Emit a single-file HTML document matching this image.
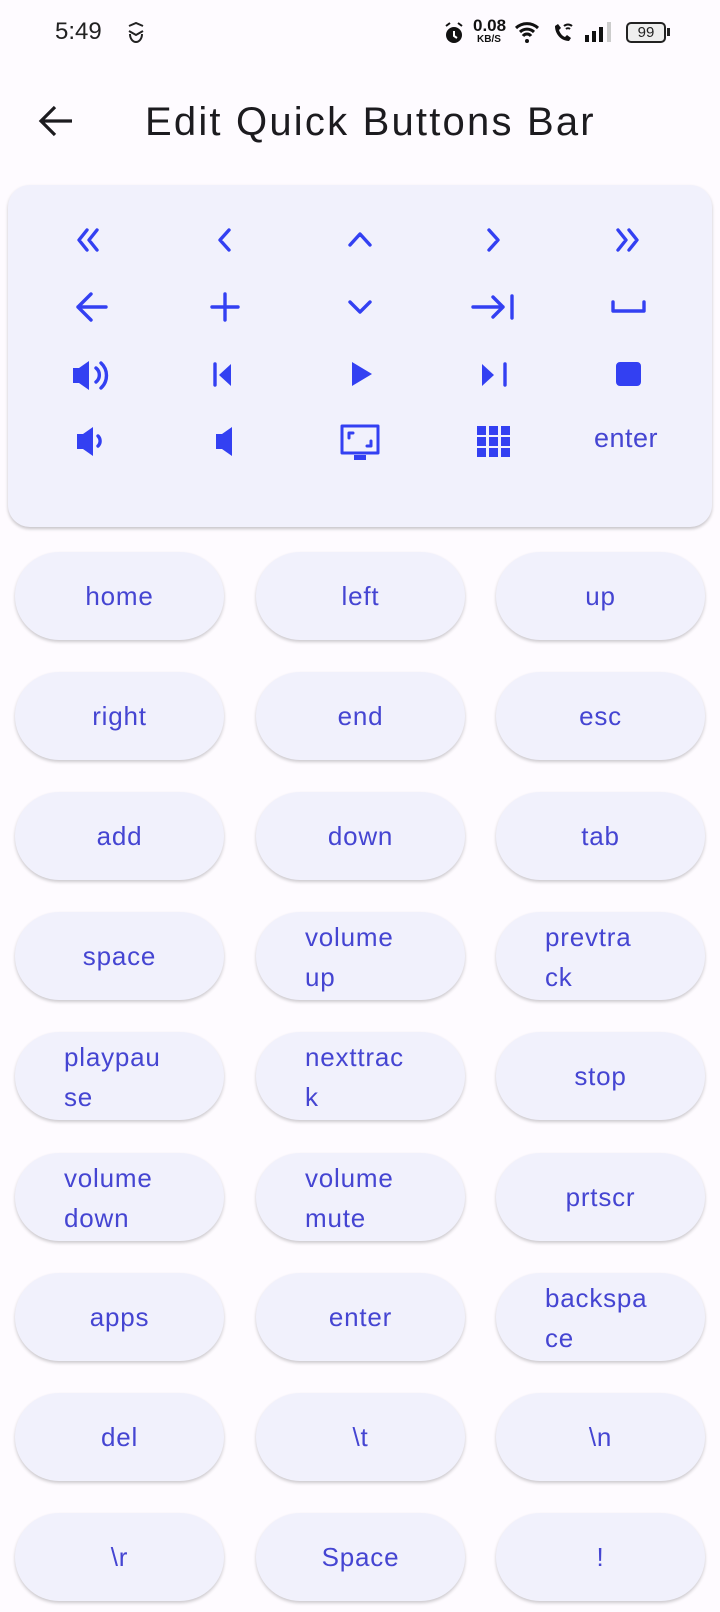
<!DOCTYPE html>
<html><head><meta charset="utf-8"><style>
*{margin:0;padding:0;box-sizing:border-box}
body{width:720px;height:1612px;background:#fefbff;font-family:"Liberation Sans",sans-serif;position:relative;overflow:hidden}
.abs{position:absolute}
.card{position:absolute;left:8px;top:185px;width:704px;height:342px;background:#f1f1fc;border-radius:22px;box-shadow:0 2px 3px rgba(0,0,0,.22)}
.pill{position:absolute;width:209px;height:88px;border-radius:44px;background:#f1f1fc;box-shadow:0 2px 3px rgba(0,0,0,.2);color:#4545d2;font-size:26px;display:flex;align-items:center;justify-content:center;letter-spacing:.8px}
.pill.m{justify-content:flex-start;padding-left:49px;line-height:40px;padding-top:2px}
</style></head><body>
<div class="abs" style="left:55px;top:18px;font-size:24px;color:#222">5:49</div>
<svg class="abs" style="left:126px;top:22px" width="20" height="22" viewBox="0 0 20 22"><path d="M3 4l7-3 7 3M3 9l7 4 7-4M4 12c0 5 3 8 6 8s6-3 6-8" fill="none" stroke="#222" stroke-width="2"/></svg>
<svg class="abs" style="left:444px;top:21px" width="20" height="24" viewBox="0 0 20 24"><circle cx="10" cy="14" r="8" fill="#111"/><path d="M10 10v5l3 2" stroke="#fff" stroke-width="2" fill="none"/><path d="M2 5l4-3M18 5l-4-3" stroke="#111" stroke-width="2"/></svg>
<div class="abs" style="left:473px;top:17px;font-size:17px;color:#111;font-weight:bold;line-height:17px">0.08</div>
<div class="abs" style="left:477px;top:34px;font-size:10px;color:#111;font-weight:bold">KB/S</div>
<svg class="abs" style="left:514px;top:20px" width="28" height="24" viewBox="0 0 28 24"><path d="M2 8a16 16 0 0 1 22 0M6 12a10 10 0 0 1 14 0M9 16a5 5 0 0 1 8 0" fill="none" stroke="#111" stroke-width="3"/><circle cx="13" cy="21" r="2" fill="#111"/></svg>
<svg class="abs" style="left:552px;top:20px" width="22" height="24" viewBox="0 0 22 24"><path d="M3 6c0 8 6 15 14 15l2-3-4-3-2 2c-3-1-5-4-6-7l2-2-3-4z" fill="#111"/><path d="M12 6a6 6 0 0 1 8 0M14 9a3 3 0 0 1 4 0" stroke="#111" stroke-width="2" fill="none"/></svg>
<svg class="abs" style="left:585px;top:20px" width="32" height="24" viewBox="0 0 32 24"><rect x="0" y="15" width="4" height="7" fill="#111"/><rect x="7" y="11" width="4" height="11" fill="#111"/><rect x="14" y="7" width="4" height="15" fill="#111"/><rect x="22" y="2" width="4" height="20" fill="#ccc"/></svg>
<div class="abs" style="left:626px;top:22px;width:40px;height:21px;border:2px solid #222;border-radius:5px;font-size:15px;text-align:center;line-height:17px;color:#222;background:#eee">99</div>
<div class="abs" style="left:667px;top:28px;width:3px;height:8px;background:#222"></div>

<svg class="abs" style="left:38px;top:104px" width="36" height="34" viewBox="0 0 36 34"><path d="M34 17H4M17 3L3 17l14 14" fill="none" stroke="#1c1b1f" stroke-width="3.2"/></svg>
<div class="abs" style="left:145px;top:100px;font-size:40px;color:#1c1b1f;letter-spacing:2.2px">Edit Quick Buttons Bar</div>

<div class="card"></div>
<svg class="abs" style="left:0;top:0" width="720" height="540" fill="none" stroke="#3340f2" stroke-width="3.4" stroke-linecap="round" stroke-linejoin="round">
<path d="M87 230l-8 10 8 10M97 230l-8 10 8 10M229 230l-9 10 9 10M350 245l10-11 10 11M489 230l9 10-9 10M618 230l8 10-8 10M629 230l8 10-8 10"/>
<path d="M106 307H78M91 294l-13 13 13 13M225 294v26M212 307h26M350 302l10 10 10-10M473 307h30M493 297l10 10-10 10M512 296v22M613 302v9h31v-9"/>
<path d="M215 364v21M505 364v21"/>
<path d="M96 368a9 9 0 0 1 0 14M101 363a17 17 0 0 1 0 25"/>
<path d="M98 436a7 7 0 0 1 0 10"/>
<path d="M342 426h36v27h-36zM349 438v-5h4M371 441v5h-4" stroke-width="3"/>
</svg>
<svg class="abs" style="left:0;top:0" width="720" height="540" fill="#3340f2">
<path d="M73 368h6l10-7v29l-10-7h-6zM219 375l12-11v22zM352 362l20 12-20 12zM482 364l12 11-12 11zM620 362h17a4 4 0 0 1 4 4v16a4 4 0 0 1-4 4h-17a4 4 0 0 1-4-4v-16a4 4 0 0 1 4-4z"/>
<path d="M77 434h6l10-7v29l-10-7h-6zM216 434h6l10-7v29l-10-7h-6zM354 455h12v5h-12z"/>
<path d="M477 426h9v9h-9zM489 426h9v9h-9zM501 426h9v9h-9zM477 437h9v9h-9zM489 437h9v9h-9zM501 437h9v9h-9zM477 448h9v9h-9zM489 448h9v9h-9zM501 448h9v9h-9z"/>
</svg>
<div class="abs" style="left:594px;top:423px;font-size:27px;color:#4545d2;letter-spacing:.5px">enter</div>

<div class="pill" style="left:15px;top:552px">home</div>
<div class="pill" style="left:256px;top:552px">left</div>
<div class="pill" style="left:496px;top:552px">up</div>
<div class="pill" style="left:15px;top:672px">right</div>
<div class="pill" style="left:256px;top:672px">end</div>
<div class="pill" style="left:496px;top:672px">esc</div>
<div class="pill" style="left:15px;top:792px">add</div>
<div class="pill" style="left:256px;top:792px">down</div>
<div class="pill" style="left:496px;top:792px">tab</div>
<div class="pill" style="left:15px;top:912px">space</div>
<div class="pill m" style="left:256px;top:912px">volume<br>up</div>
<div class="pill m" style="left:496px;top:912px">prevtra<br>ck</div>
<div class="pill m" style="left:15px;top:1032px">playpau<br>se</div>
<div class="pill m" style="left:256px;top:1032px">nexttrac<br>k</div>
<div class="pill" style="left:496px;top:1032px">stop</div>
<div class="pill m" style="left:15px;top:1153px">volume<br>down</div>
<div class="pill m" style="left:256px;top:1153px">volume<br>mute</div>
<div class="pill" style="left:496px;top:1153px">prtscr</div>
<div class="pill" style="left:15px;top:1273px">apps</div>
<div class="pill" style="left:256px;top:1273px">enter</div>
<div class="pill m" style="left:496px;top:1273px">backspa<br>ce</div>
<div class="pill" style="left:15px;top:1393px">del</div>
<div class="pill" style="left:256px;top:1393px">\t</div>
<div class="pill" style="left:496px;top:1393px">\n</div>
<div class="pill" style="left:15px;top:1513px">\r</div>
<div class="pill" style="left:256px;top:1513px">Space</div>
<div class="pill" style="left:496px;top:1513px">!</div>
</body></html>
